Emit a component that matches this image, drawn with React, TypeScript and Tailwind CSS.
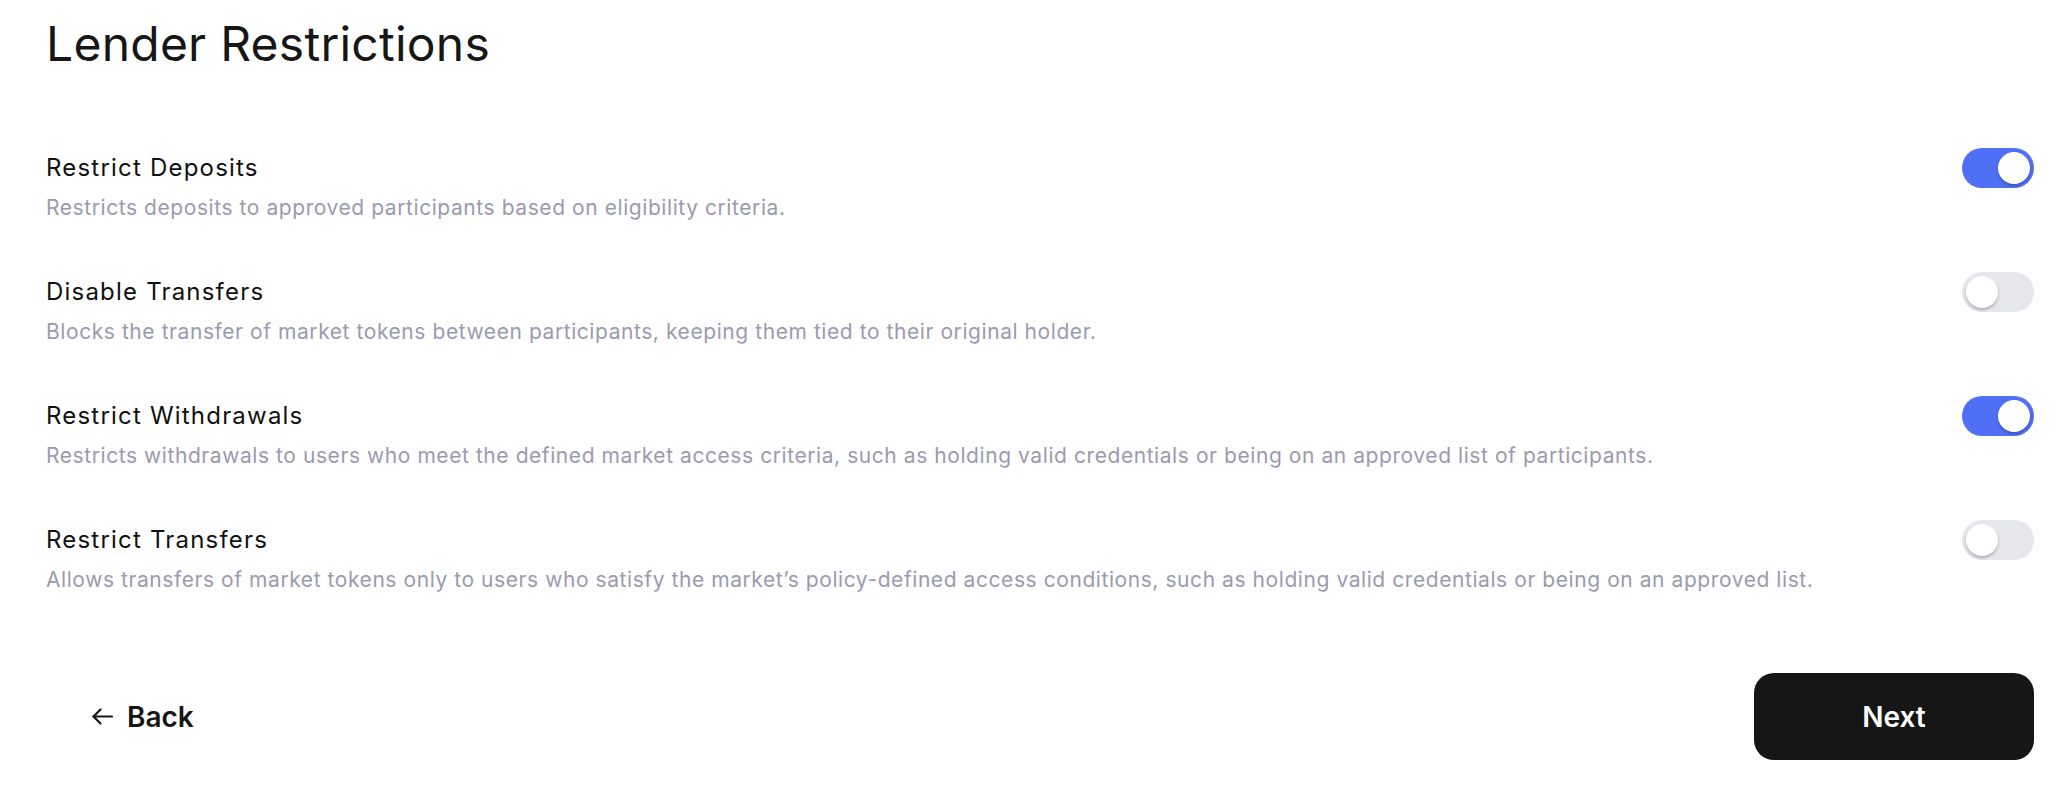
import React, { useState } from "react";

type Row = { title: string; desc: string; on: boolean };

const rows: Row[] = [
  {
    title: "Restrict Deposits",
    desc: "Restricts deposits to approved participants based on eligibility criteria.",
    on: true,
  },
  {
    title: "Disable Transfers",
    desc: "Blocks the transfer of market tokens between participants, keeping them tied to their original holder.",
    on: false,
  },
  {
    title: "Restrict Withdrawals",
    desc: "Restricts withdrawals to users who meet the defined market access criteria, such as holding valid credentials or being on an approved list of participants.",
    on: true,
  },
  {
    title: "Restrict Transfers",
    desc: "Allows transfers of market tokens only to users who satisfy the market\u2019s policy-defined access conditions, such as holding valid credentials or being on an approved list.",
    on: false,
  },
];

function Toggle({ on, onClick }: { on: boolean; onClick: () => void }) {
  return (
    <button
      onClick={onClick}
      className={
        "flex h-[40px] w-[72px] shrink-0 items-center rounded-full p-[4px] " +
        (on ? "justify-end bg-[#4f6ff6]" : "justify-start bg-[#e6e7eb]")
      }
    >
      <span className="block h-[32px] w-[32px] rounded-full bg-white shadow-[0_2px_3px_rgba(0,0,0,0.25)]" />
    </button>
  );
}

export default function App() {
  const [state, setState] = useState(rows.map((r) => r.on));
  return (
    <div
      className="flex h-[810px] w-full flex-col bg-white pl-[46px] pr-[32px] text-[#161616]"
      style={{ fontFamily: "Inter, 'Noto Sans', sans-serif" }}
    >
      <h1 className="mt-[20px] text-[48px] leading-[48px] font-normal tracking-[0.25px]">
        Lender Restrictions
      </h1>

      <div className="mt-[80px] flex flex-col gap-[50px]">
        {rows.map((r, i) => (
          <div key={r.title} className="flex flex-col">
            <div className="flex h-[40px] items-center justify-between">
              <span className="text-[24px] leading-[32px] font-normal tracking-[1.2px] text-[#111111]">{r.title}</span>
              <Toggle
                on={state[i]}
                onClick={() => setState((s) => s.map((v, j) => (j === i ? !v : v)))}
              />
            </div>
            <p className="mt-[6px] text-[21px] leading-[28px] tracking-[0.57px] text-[#9b9aae]">{r.desc}</p>
          </div>
        ))}
      </div>

      <div className="mt-[79px] flex items-center justify-between">
        <button className="flex h-[87px] items-center gap-[14px] pl-[46px] pr-[20px] text-[28px] font-semibold text-[#161616]">
          <svg width="21" height="17" viewBox="0 0 21 17" fill="none" stroke="#161616" strokeWidth="2.2" strokeLinecap="round" strokeLinejoin="round">
            <path d="M20 8.5H1.5" />
            <path d="M8.5 1.5L1.5 8.5L8.5 15.5" />
          </svg>
          <span>Back</span>
        </button>
        <button className="flex h-[87px] w-[280px] items-center justify-center rounded-[20px] bg-[#161616] text-[28px] font-semibold text-white">
          Next
        </button>
      </div>
    </div>
  );
}
